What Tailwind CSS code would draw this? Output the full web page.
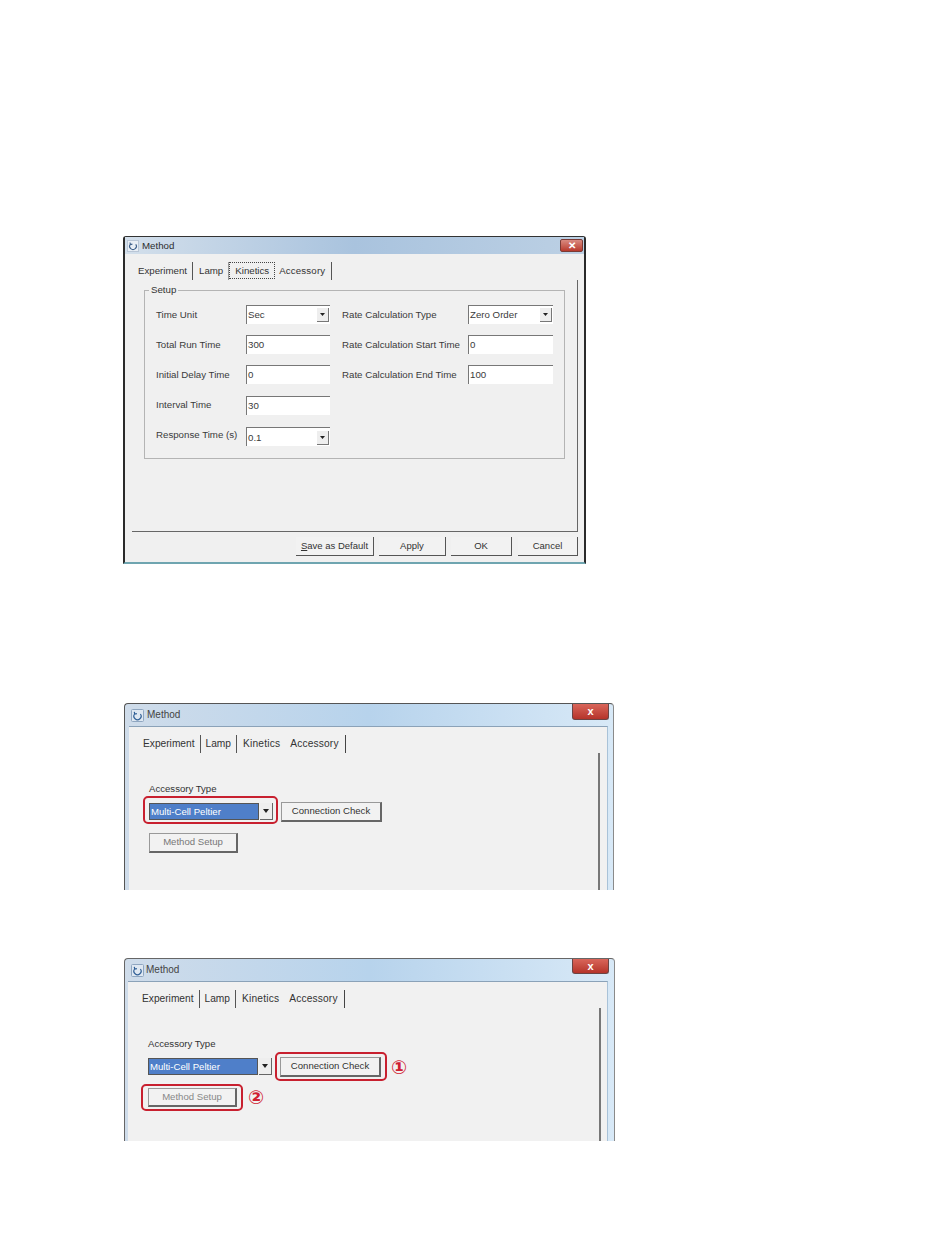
<!doctype html>
<html>
<head>
<meta charset="utf-8">
<script src="https://cdn.jsdelivr.net/npm/@tailwindcss/browser@4"></script>
</head>
<body class="bg-white">
<div class="w-[950px] h-[1248px] bg-white pl-[123px] font-['Liberation_Sans',Arial,sans-serif] text-[#3a3a3a] flex flex-col">

  <!-- WINDOW 1 -->
  <section class="mt-[236px] w-[463px] h-[328px] border-x-2 border-t border-x-[#2a2a2a] border-t-[#333] border-b-2 border-b-[#6fa5b0] bg-[#f0f0f0] rounded-t-[3px] flex flex-col text-[9.7px] leading-none">
    <header class="h-[17px] shrink-0 bg-gradient-to-r from-[#d3dfeb] via-[#a9c3de] to-[#bcd0e4] flex items-center pl-[2px] pr-[1px]">
      <svg width="12" height="12" viewBox="0 0 12 12" class="shrink-0"><rect x=".5" y=".5" width="11" height="11" fill="#e8eef5" stroke="#b9c6d6"/><path d="M3.2 4.2A3.4 3.4 0 1 0 8.8 4.2M3 2.5l.4 2 2-.4" fill="none" stroke="#3d5f8a" stroke-width="1.1"/></svg>
      <span class="ml-[3px] text-[#2c2c2c]">Method</span>
      <span class="ml-auto w-[23px] h-[13px] rounded-[2px] bg-gradient-to-b from-[#d98a80] to-[#b8382c] border border-[#7a3a35] flex items-center justify-center text-white text-[10px] font-bold">✕</span>
    </header>
    <div class="flex-1 flex flex-col pl-[7px] pr-[6px] bg-[#f0f0f0]">
      <nav class="h-[26px] shrink-0 pt-[8px] flex items-stretch text-[#333]">
        <span class="pl-[6px] pr-[5px] border-r border-[#555] h-[18px] flex items-center">Experiment</span>
        <span class="pl-[6px] pr-[5px] h-[18px] flex items-center">Lamp</span>
        <span class="border-l border-[#999] h-[18px] w-0"></span>
        <span class="px-[4px] w-[46px] h-[17px] border border-dotted border-[#444] flex items-center justify-center">Kinetics</span>
        <span class="pl-[4px] pr-[6px] border-r border-[#555] h-[18px] flex items-center tracking-[0.15px]">Accessory</span>
      </nav>
      <div class="h-[252px] shrink-0 border-r border-b border-[#666] pl-[12px] pr-[12px] pt-[10px]">
        <fieldset class="relative h-[169px] border border-[#b4b4b4] pl-[11px] pt-[14px]">
          <legend class="absolute left-[4px] top-[-6px] bg-[#f0f0f0] px-[2px] text-[#333]">Setup</legend>
          <div class="grid grid-cols-[90px_84px_12px_126px_85px] auto-rows-[19px] gap-y-[11px] items-center">
            <label>Time Unit</label>
            <div class="h-[19px] bg-white border-t border-l border-[#777] flex items-center pl-[1px] pr-[1px]"><span>Sec</span><span class="ml-auto w-[12px] h-[14px] bg-[#eee] border-r border-b border-[#777] flex items-center justify-center"><svg width="5" height="3"><path d="M0 0h5L2.5 3z" fill="#222"/></svg></span></div>
            <span></span>
            <label>Rate Calculation Type</label>
            <div class="h-[19px] bg-white border-t border-l border-[#777] flex items-center pl-[1px] pr-[1px]"><span>Zero Order</span><span class="ml-auto w-[12px] h-[14px] bg-[#eee] border-r border-b border-[#777] flex items-center justify-center"><svg width="5" height="3"><path d="M0 0h5L2.5 3z" fill="#222"/></svg></span></div>

            <label>Total Run Time</label>
            <div class="h-[19px] bg-white border-t border-l border-[#777] flex items-center pl-[1px]">300</div>
            <span></span>
            <label>Rate Calculation Start Time</label>
            <div class="h-[19px] bg-white border-t border-l border-[#777] flex items-center pl-[1px]">0</div>

            <label>Initial Delay Time</label>
            <div class="h-[19px] bg-white border-t border-l border-[#777] flex items-center pl-[1px]">0</div>
            <span></span>
            <label>Rate Calculation End Time</label>
            <div class="h-[19px] bg-white border-t border-l border-[#777] flex items-center pl-[1px]">100</div>

            <label class="mt-[1px]">Interval Time</label>
            <div class="mt-[1px] h-[19px] bg-white border-t border-l border-[#777] flex items-center pl-[1px]">30</div>
            <span class="col-span-3"></span>

            <label class="mt-[1px]">Response Time (s)</label>
            <div class="mt-[3px] h-[19px] bg-white border-t border-l border-[#777] flex items-center pl-[1px] pr-[1px] pt-[2px]"><span>0.1</span><span class="ml-auto w-[12px] h-[14px] bg-[#eee] border-r border-b border-[#777] flex items-center justify-center"><svg width="5" height="3"><path d="M0 0h5L2.5 3z" fill="#222"/></svg></span></div>
            <span class="col-span-3"></span>
          </div>
        </fieldset>
      </div>
      <footer class="pt-[5px] flex justify-end gap-[5px] text-[#333] text-[9.5px]">
        <button class="w-[78px] h-[19px] bg-[#f2f2f2] border-r border-b border-[#555] leading-none"><span class="underline">S</span>ave as Default</button>
        <button class="w-[67px] h-[19px] bg-[#f2f2f2] border-r border-b border-[#555] leading-none">Apply</button>
        <button class="w-[61px] h-[19px] bg-[#f2f2f2] border-r border-b border-[#555] leading-none">OK</button>
        <button class="ml-[1px] w-[60px] h-[19px] bg-[#f2f2f2] border-r border-b border-[#555] leading-none">Cancel</button>
      </footer>
    </div>
  </section>

  <!-- WINDOW 2 -->
  <section class="mt-[139px] ml-[1px] w-[490px] h-[187px] border-l border-t border-r border-[#555] border-r-[#8a8a8a] rounded-t-[4px] bg-gradient-to-r from-[#cfdcea] via-[#b7d3ec] to-[#d8e9f7] flex flex-col text-[9.6px] leading-none">
    <header class="relative h-[22px] shrink-0 flex items-center pl-[6px]">
      <svg width="13" height="13" viewBox="0 0 13 13" class="shrink-0"><rect x=".5" y=".5" width="12" height="12" rx="1" fill="#dfe8f2" stroke="#8fa6c0"/><path d="M3.6 5A3.6 3.6 0 1 0 9.4 5M3.3 2.8l.4 2.3 2.2-.5" fill="none" stroke="#2f5f96" stroke-width="1.2"/></svg>
      <span class="ml-[3px] text-[10px] text-[#444]">Method</span>
      <span class="absolute right-[4px] top-0 w-[37px] h-[16px] rounded-b-[3px] bg-gradient-to-b from-[#d9655a] to-[#b5332a] border border-t-0 border-[#6b4444] flex items-center justify-center text-white text-[11px] font-bold">x</span>
    </header>
    <div class="flex-1 ml-[4px] mr-[5px] bg-[#f1f1f1] border-t border-r border-[#8ba2b8] border-r-[#a9c2d8] flex flex-col">
      <nav class="h-[26px] shrink-0 pt-[8px] pl-[14px] flex text-[10.2px] text-[#333]">
        <span class="pr-[5px] border-r border-[#555] h-[18px] flex items-center pt-[1px]">Experiment</span>
        <span class="px-[5px] border-r border-[#555] h-[18px] flex items-center pt-[1px]">Lamp</span>
        <span class="pl-[6px] pr-[10px] h-[18px] flex items-center pt-[1px] tracking-[0.2px]">Kinetics</span>
        <span class="pr-[6px] border-r border-[#444] h-[18px] flex items-center tracking-[0.15px]">Accessory</span>
      </nav>
      <div class="flex-1 mr-[7px] border-r-2 border-[#777] pl-[20px] pt-[31px]">
        <p class="text-[#333]">Accessory Type</p>
        <div class="relative mt-[8px] h-[20px] flex items-center">
          <span class="absolute left-[-6px] top-[-6px] w-[135px] h-[28px] border-2 border-[#c8202f] rounded-[5px]"></span>
          <div class="w-[110px] h-[17px] bg-[#4f7fc9] border border-[#555] text-white flex items-center pl-[1px]">Multi-Cell Peltier</div>
          <span class="ml-[1px] w-[13px] h-[17px] bg-[#eee] border-r border-b border-[#666] flex items-center justify-center"><svg width="6" height="4"><path d="M0 0h6L3 4z" fill="#222"/></svg></span>
          <button class="ml-[8px] w-[101px] h-[20px] bg-[#f2f2f2] border border-[#999] border-r-2 border-b-2 border-r-[#666] border-b-[#666] text-[#333] leading-none">Connection Check</button>
        </div>
        <button class="mt-[11px] block w-[89px] h-[20px] bg-[#f2f2f2] border border-[#999] border-r-2 border-b-2 border-r-[#666] border-b-[#666] text-[#777] leading-none">Method Setup</button>
      </div>
    </div>
  </section>

  <!-- WINDOW 3 -->
  <section class="mt-[68px] ml-[1px] w-[491px] h-[183px] border-l border-t border-r border-[#666] border-r-[#8a8a8a] rounded-t-[4px] bg-gradient-to-r from-[#cfdcea] via-[#b7d3ec] to-[#d8e9f7] flex flex-col text-[9.6px] leading-none">
    <header class="relative h-[22px] shrink-0 flex items-center pl-[6px]">
      <svg width="13" height="13" viewBox="0 0 13 13" class="shrink-0"><rect x=".5" y=".5" width="12" height="12" rx="1" fill="#dfe8f2" stroke="#8fa6c0"/><path d="M3.6 5A3.6 3.6 0 1 0 9.4 5M3.3 2.8l.4 2.3 2.2-.5" fill="none" stroke="#2f5f96" stroke-width="1.2"/></svg>
      <span class="ml-[2px] text-[10px] text-[#444]">Method</span>
      <span class="absolute right-[5px] top-0 w-[37px] h-[15px] rounded-b-[3px] bg-gradient-to-b from-[#d9655a] to-[#b5332a] border border-t-0 border-[#6b4444] flex items-center justify-center text-white text-[11px] font-bold">x</span>
    </header>
    <div class="flex-1 ml-[3px] mr-[6px] bg-[#f1f1f1] border-t border-r border-[#8ba2b8] border-r-[#a9c2d8] flex flex-col">
      <nav class="h-[26px] shrink-0 pt-[8px] pl-[14px] flex text-[10.2px] text-[#333]">
        <span class="pr-[5px] border-r border-[#555] h-[18px] flex items-center pt-[1px]">Experiment</span>
        <span class="px-[5px] border-r border-[#555] h-[18px] flex items-center pt-[1px]">Lamp</span>
        <span class="pl-[6px] pr-[10px] h-[18px] flex items-center pt-[1px] tracking-[0.2px]">Kinetics</span>
        <span class="pr-[6px] border-r border-[#444] h-[18px] flex items-center tracking-[0.15px]">Accessory</span>
      </nav>
      <div class="flex-1 mr-[6px] border-r-2 border-[#777] pl-[20px] pt-[31px]">
        <p class="text-[#333]">Accessory Type</p>
        <div class="relative mt-[8px] h-[20px] flex items-center">
          <div class="w-[110px] h-[17px] bg-[#4f7fc9] border border-[#555] text-white flex items-center pl-[1px]">Multi-Cell Peltier</div>
          <span class="ml-[1px] w-[13px] h-[17px] bg-[#eee] border-r border-b border-[#666] flex items-center justify-center"><svg width="6" height="4"><path d="M0 0h6L3 4z" fill="#222"/></svg></span>
          <button class="relative ml-[8px] w-[101px] h-[20px] bg-[#f2f2f2] border border-[#999] border-r-2 border-b-2 border-r-[#666] border-b-[#666] text-[#333] leading-none">Connection Check<span class="absolute left-[-6px] top-[-6px] w-[112px] h-[29px] border-2 border-[#c8202f] rounded-[5px]"></span><span class="absolute left-[110px] top-[-1px] text-[#d02030] text-[19px] leading-[20px] font-bold font-['DejaVu_Sans',sans-serif]">①</span></button>
        </div>
        <button class="relative mt-[11px] block w-[89px] h-[19px] bg-[#f2f2f2] border border-[#999] border-r-2 border-b-2 border-r-[#666] border-b-[#666] text-[#888] leading-none">Method Setup<span class="absolute left-[-8px] top-[-5px] w-[102px] h-[27px] border-2 border-[#c8202f] rounded-[5px]"></span><span class="absolute left-[99px] top-[-2px] text-[#d02030] text-[19px] leading-[20px] font-bold font-['DejaVu_Sans',sans-serif]">②</span></button>
      </div>
    </div>
  </section>

</div>
</body>
</html>
